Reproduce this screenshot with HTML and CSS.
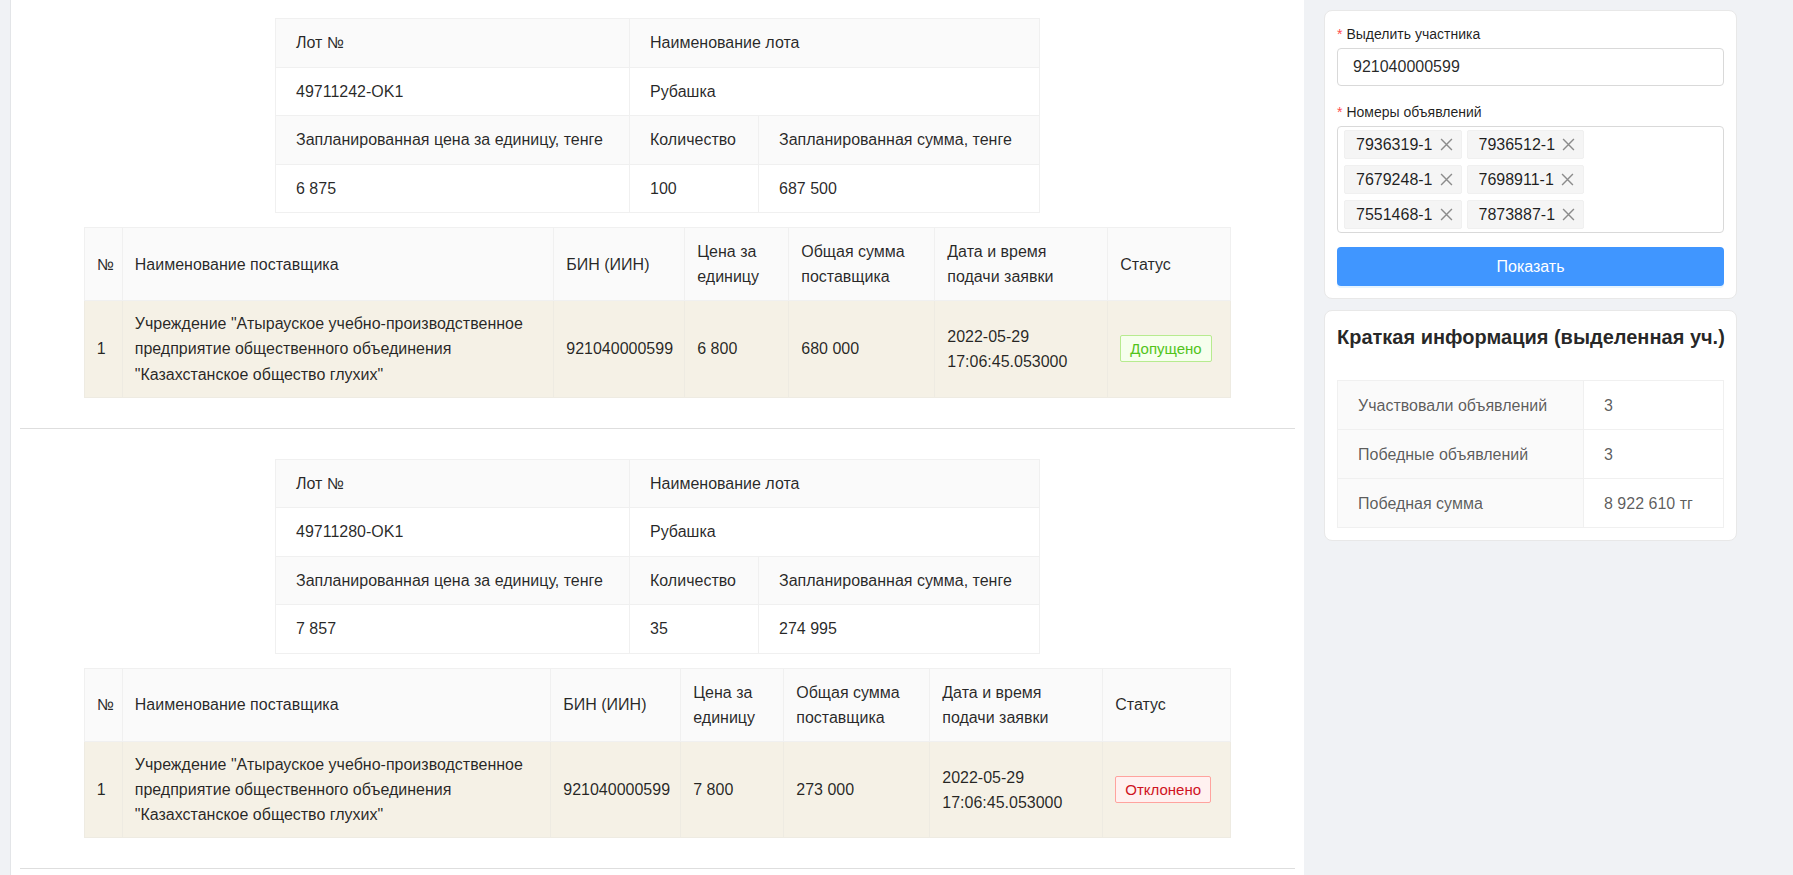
FILE: index.html
```html
<!DOCTYPE html>
<html lang="ru">
<head>
<meta charset="utf-8">
<title>Участник</title>
<link rel="stylesheet" href="styles.css">
</head>
<body>
<div class="page">
  <main class="main">
    <section class="block">
      <table class="lot-table">
        <colgroup><col class="lc1"><col class="lc2"><col></colgroup>
        <tr><th>Лот №</th><th colspan="2">Наименование лота</th></tr>
        <tr><td>49711242-OK1</td><td colspan="2">Рубашка</td></tr>
        <tr><th>Запланированная цена за единицу, тенге</th><th>Количество</th><th>Запланированная сумма, тенге</th></tr>
        <tr><td>6 875</td><td>100</td><td>687 500</td></tr>
      </table>
      <table class="sup-table sup-a">
        <colgroup><col class="c-no"><col><col class="c-bin"><col class="c-price"><col class="c-sum"><col class="c-date"><col class="c-status"></colgroup>
        <thead>
          <tr><th>№</th><th>Наименование поставщика</th><th>БИН (ИИН)</th><th>Цена за<br>единицу</th><th>Общая сумма<br>поставщика</th><th>Дата и время<br>подачи заявки</th><th>Статус</th></tr>
        </thead>
        <tbody>
          <tr class="hl"><td>1</td><td>Учреждение "Атырауское учебно-производственное<br>предприятие общественного объединения<br>"Казахстанское общество глухих"</td><td>921040000599</td><td>6 800</td><td>680 000</td><td>2022-05-29<br>17:06:45.053000</td><td><span class="badge ok">Допущено</span></td></tr>
        </tbody>
      </table>
    </section>
    <hr class="sep">
    <section class="block">
      <table class="lot-table">
        <colgroup><col class="lc1"><col class="lc2"><col></colgroup>
        <tr><th>Лот №</th><th colspan="2">Наименование лота</th></tr>
        <tr><td>49711280-OK1</td><td colspan="2">Рубашка</td></tr>
        <tr><th>Запланированная цена за единицу, тенге</th><th>Количество</th><th>Запланированная сумма, тенге</th></tr>
        <tr><td>7 857</td><td>35</td><td>274 995</td></tr>
      </table>
      <table class="sup-table sup-b">
        <colgroup><col class="c-no"><col><col class="c-bin"><col class="c-price"><col class="c-sum"><col class="c-date"><col class="c-status"></colgroup>
        <thead>
          <tr><th>№</th><th>Наименование поставщика</th><th>БИН (ИИН)</th><th>Цена за<br>единицу</th><th>Общая сумма<br>поставщика</th><th>Дата и время<br>подачи заявки</th><th>Статус</th></tr>
        </thead>
        <tbody>
          <tr class="hl"><td>1</td><td>Учреждение "Атырауское учебно-производственное<br>предприятие общественного объединения<br>"Казахстанское общество глухих"</td><td>921040000599</td><td>7 800</td><td>273 000</td><td>2022-05-29<br>17:06:45.053000</td><td><span class="badge bad">Отклонено</span></td></tr>
        </tbody>
      </table>
    </section>
    <hr class="sep">
  </main>

  <aside class="side">
    <div class="card form-card">
      <div class="field">
        <label class="lbl"><span class="req">*</span>Выделить участника</label>
        <div class="input">921040000599</div>
      </div>
      <div class="field">
        <label class="lbl"><span class="req">*</span>Номеры объявлений</label>
        <div class="select">
          <span class="tag">7936319-1<svg class="x" viewBox="0 0 12 12"><path d="M1 1L11 11M11 1L1 11"/></svg></span>
          <span class="tag">7936512-1<svg class="x" viewBox="0 0 12 12"><path d="M1 1L11 11M11 1L1 11"/></svg></span>
          <span class="tag">7679248-1<svg class="x" viewBox="0 0 12 12"><path d="M1 1L11 11M11 1L1 11"/></svg></span>
          <span class="tag">7698911-1<svg class="x" viewBox="0 0 12 12"><path d="M1 1L11 11M11 1L1 11"/></svg></span>
          <span class="tag">7551468-1<svg class="x" viewBox="0 0 12 12"><path d="M1 1L11 11M11 1L1 11"/></svg></span>
          <span class="tag">7873887-1<svg class="x" viewBox="0 0 12 12"><path d="M1 1L11 11M11 1L1 11"/></svg></span>
        </div>
      </div>
      <button class="btn" type="button">Показать</button>
    </div>

    <div class="card info-card">
      <h3 class="info-title">Краткая информация (выделенная уч.)</h3>
      <table class="sum-table">
        <tr><td class="k">Участвовали объявлений</td><td>3</td></tr>
        <tr><td class="k">Победные объявлений</td><td>3</td></tr>
        <tr><td class="k">Победная сумма</td><td>8 922 610 тг</td></tr>
      </table>
    </div>
  </aside>
</div>
</body>
</html>
```

FILE: styles.css
```css
html, body {
  margin: 0;
  padding: 0;
}
body {
  background: #f0f2f5;
  font-family: "Liberation Sans", Arial, sans-serif;
  font-size: 16px;
  color: rgba(0, 0, 0, 0.85);
  overflow: hidden;
}
.page {
  display: flex;
  align-items: flex-start;
  padding-left: 10px;
}
.main {
  box-sizing: border-box;
  width: 1294px;
  min-height: 875px;
  background: #fff;
  border-left: 1px solid #e3e5e8;
  padding: 18px 9px 0;
}
.block {
  display: flex;
  flex-direction: column;
  align-items: center;
  gap: 14px;
}
.sep {
  border: 0;
  height: 1px;
  background: #dedede;
  margin: 30px 0;
}

/* lot table */
.lot-table {
  width: 60%;
  border-collapse: collapse;
  table-layout: fixed;
  border: 1px solid #f0f0f0;
}
.lot-table .lc1 { width: 354px; }
.lot-table .lc2 { width: 129px; }
.lot-table th,
.lot-table td {
  border: 1px solid #f0f0f0;
  padding: 11.25px 20px;
  line-height: 25px;
  text-align: left;
  font-weight: normal;
  white-space: nowrap;
}
.lot-table th { background: #fafafa; }
.lot-table td { background: #fff; }

/* supplier table */
.sup-table {
  width: 90%;
  border-collapse: collapse;
  table-layout: fixed;
  border: 1px solid #f0f0f0;
}
.sup-table .c-no { width: 38px; }
.sup-table .c-bin { width: 131px; }
.sup-table .c-price { width: 104px; }
.sup-table .c-sum { width: 146px; }
.sup-table .c-date { width: 173px; }
.sup-table .c-status { width: 123px; }
.sup-b .c-bin { width: 130px; }
.sup-b .c-price { width: 103px; }
.sup-b .c-status { width: 128px; }
.sup-table th,
.sup-table td {
  border: 1px solid #f0f0f0;
  padding: 11px 12px;
  line-height: 1.5715;
  text-align: left;
  font-weight: normal;
  vertical-align: middle;
}
.sup-table th { background: #fafafa; }
.sup-table td { padding: 10px 12px; white-space: nowrap; }
.sup-table td:first-child, .sup-table th:first-child { padding-right: 6px; }
.sup-table tr.hl td {
  background: #f5f1e6;
  border-color: #eeebe2;
}

.badge {
  display: inline-block;
  box-sizing: border-box;
  height: 27px;
  line-height: 25px;
  padding: 0 9px;
  font-size: 15px;
  border: 1px solid;
  border-radius: 2px;
}
.badge.ok {
  color: #52c41a;
  background: #f6ffed;
  border-color: #b7eb8f;
}
.badge.bad {
  color: #cf1322;
  background: #fff1f0;
  border-color: #ffa39e;
}

/* side */
.side {
  width: 413px;
  margin-left: 20px;
  padding-top: 10px;
  display: flex;
  flex-direction: column;
  gap: 11px;
}
.card {
  background: #fff;
  border: 1px solid #e8e8e8;
  border-radius: 8px;
  padding: 12px;
}
.field { margin-bottom: 15px; }
.field + .field { margin-bottom: 14px; }
.lbl {
  display: block;
  font-size: 14px;
  line-height: 22px;
  margin-bottom: 3px;
  color: rgba(0, 0, 0, 0.88);
}
.req {
  color: #ff4d4f;
  margin-right: 4px;
  font-size: 14px;
}
.input {
  box-sizing: border-box;
  height: 38px;
  line-height: 36px;
  border: 1px solid #d9d9d9;
  border-radius: 4px;
  padding: 0 15px;
  font-size: 16px;
}
.select {
  box-sizing: border-box;
  border: 1px solid #d9d9d9;
  border-radius: 4px;
  padding: 3px 6px;
  display: grid;
  grid-template-columns: repeat(2, max-content);
  column-gap: 5px;
  row-gap: 6px;
}
.tag {
  box-sizing: border-box;
  display: inline-flex;
  align-items: center;
  gap: 7px;
  height: 29px;
  padding: 0 8px 0 11px;
  background: #f5f5f5;
  border: 1px solid #f0f0f0;
  border-radius: 2px;
  font-size: 16px;
  color: rgba(0, 0, 0, 0.88);
}
.x {
  width: 13px;
  height: 13px;
  fill: none;
  stroke: #8c8c8c;
  stroke-width: 1.3;
}
.btn {
  display: block;
  width: 100%;
  height: 39px;
  border: 0;
  border-radius: 4px;
  background: #4096ff;
  color: #fff;
  font-family: "Liberation Sans", Arial, sans-serif;
  font-size: 16px;
  box-shadow: 0 2px 0 rgba(5, 145, 255, 0.1);
}
.info-title {
  margin: 0 0 29px;
  font-size: 20px;
  line-height: 28px;
  font-weight: bold;
  white-space: nowrap;
  color: rgba(0, 0, 0, 0.85);
}
.sum-table {
  width: 100%;
  border-collapse: collapse;
  table-layout: fixed;
  border: 1px solid #f0f0f0;
}
.sum-table td {
  border: 1px solid #f0f0f0;
  padding: 11.5px 20px;
  line-height: 25px;
  color: rgba(0, 0, 0, 0.65);
  white-space: nowrap;
}
.sum-table td.k {
  width: 205px;
  background: #fafafa;
}
```
